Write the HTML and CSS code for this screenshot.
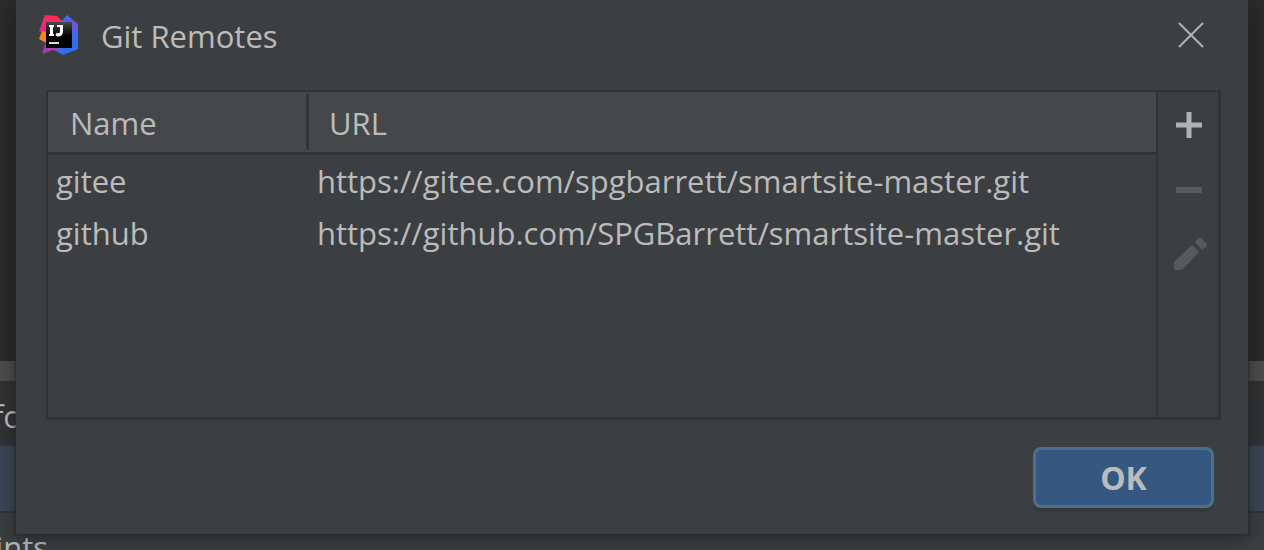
FILE: index.html
```html
<!DOCTYPE html>
<html lang="en">
<head>
<meta charset="utf-8">
<title>Git Remotes</title>
<link rel="stylesheet" href="styles.css">
</head>
<body>
<div class="workspace">
  <div class="backdrop">
    <div class="editor"></div>
    <div class="splitter"></div>
    <div class="row row-header"><span class="clip">fo</span></div>
    <div class="row row-selected"></div>
    <div class="row row-last"><span class="clip clip-wide">ints</span></div>
  </div>
  <section class="dialog" role="dialog" aria-labelledby="dialog-title">
    <header class="titlebar">
      <svg class="logo" viewBox="0 0 40 42" aria-hidden="true">
        <defs>
          <linearGradient id="blue" x1="0" y1="0" x2="0.6" y2="1">
            <stop offset="0" stop-color="#3b6df0"/><stop offset="0.35" stop-color="#4a66e6"/><stop offset="0.5" stop-color="#7551d8"/><stop offset="0.75" stop-color="#3a6ce8"/><stop offset="1" stop-color="#2f6cf0"/>
          </linearGradient>
          <linearGradient id="red" x1="0.4" y1="0" x2="0.2" y2="1">
            <stop offset="0" stop-color="#ff2857"/><stop offset="0.5" stop-color="#f52a68"/><stop offset="1" stop-color="#c02c9c"/>
          </linearGradient>
          <linearGradient id="violet" x1="0" y1="0" x2="1" y2="0">
            <stop offset="0" stop-color="#9c3ac4"/><stop offset="0.6" stop-color="#c03a9c"/><stop offset="1" stop-color="#6a56dd"/>
          </linearGradient>
          <linearGradient id="tile" x1="0" y1="0" x2="0" y2="1">
            <stop offset="0" stop-color="#484848"/><stop offset="0.55" stop-color="#000"/>
          </linearGradient>
        </defs>
        <path fill="url(#blue)" d="M28 1 39 10V35L24 41 15 36 22 8Z"/>
        <path fill="url(#red)" d="M6 1 18 2 24 8 22 20H8L0 17Z"/>
        <path fill="#fc801d" d="M3 17 9 18V30L0 25Z"/>
        <path fill="url(#violet)" d="M6 30H22L20 35 14 36 3 40Z"/>
        <path fill="url(#tile)" d="M7 8H33V34H7Z"/>
        <path fill="none" stroke="#fff" stroke-width="2" d="M10 12H15M10 21H15M18 12H24"/>
        <path fill="none" stroke="#fff" stroke-width="3" d="M12.500 12V21M22.500 12V18Q22 21 19 21L17 20"/>
        <path fill="#ddd" d="M10 28H20V30H10Z"/>
      </svg>
      <h1 class="title" id="dialog-title">Git Remotes</h1>
      <button class="close" type="button" aria-label="Close">
        <svg viewBox="0 0 26 26" aria-hidden="true"><path d="M1 1 25 25M25 1 1 25"/></svg>
      </button>
    </header>
    <div class="panel">
      <div class="list">
        <table class="remotes">
          <thead>
            <tr><th class="name" scope="col">Name</th><th scope="col">URL</th></tr>
          </thead>
          <tbody>
            <tr><td>gitee</td><td>https://gitee.com/spgbarrett/smartsite-master.git</td></tr>
            <tr><td>github</td><td>https://github.com/SPGBarrett/smartsite-master.git</td></tr>
          </tbody>
        </table>
      </div>
      <div class="tools">
        <button class="tool" type="button" aria-label="Add"><svg viewBox="0 0 36 36" aria-hidden="true"><path d="M15.500 5h5v10.500H31v5H20.500V31h-5V20.500H5v-5h10.500Z"/></svg></button>
        <button class="tool" type="button" aria-label="Remove" disabled><svg viewBox="0 0 36 36" aria-hidden="true"><path d="M5 15h26v6H5Z"/></svg></button>
        <button class="tool" type="button" aria-label="Edit" disabled><svg viewBox="0 0 36 36" aria-hidden="true"><path d="M21 8 28 15 11 33H3V25ZM24 5 27 2Q29 0 31 2L35 6Q37 8 35 10L31 13Z"/></svg></button>
      </div>
    </div>
    <footer class="actions"><button class="ok" type="button">OK</button></footer>
  </section>
</div>
</body>
</html>
```
FILE: styles.css
```css
* {
  box-sizing: border-box;
}

body {
  margin: 0;
  background: #3c3f41;
  color: #bbbbbb;
  font-family: "Open Sans", "Noto Sans", sans-serif;
  font-size: 31px;
  line-height: 44px;
}

button {
  padding: 0;
  border: 0;
  background: none;
  color: inherit;
  font: inherit;
}

svg {
  display: block;
}

.workspace {
  position: relative;
  min-height: 100vh;
  overflow: hidden;
}

.backdrop {
  display: flex;
  flex-direction: column;
  height: 100vh;
}

.editor {
  flex: 1;
  background: #2b2b2b;
}

.splitter {
  height: 24px;
  border-bottom: 4px solid #323232;
  background: #4d4d4d;
}

.row {
  display: flex;
  align-items: center;
  overflow: hidden;
}

.row-header {
  height: 61px;
  background: #313335;
}

.row-selected {
  height: 67px;
  border-bottom: 2px solid #313335;
  background: #3b4754;
}

.row-last {
  height: 37px;
  align-items: flex-start;
}

.clip {
  display: flex;
  justify-content: flex-end;
  width: 22px;
}

.clip-wide {
  width: 48px;
  padding-top: 12px;
}

.dialog {
  position: absolute;
  top: 0;
  left: 16px;
  right: 16px;
  padding: 0 27px 26px 30px;
  background: #3c3f41;
  box-shadow: 0 0 0 2px rgba(40, 40, 40, 0.5), 0 4px 20px rgba(0, 0, 0, 0.4);
}

.titlebar {
  display: flex;
  align-items: center;
  height: 90px;
  padding: 0 17px 20px 0;
}

.logo {
  width: 40px;
  height: 42px;
  margin: 0 22px 0 -7px;
}

.title {
  flex: 1;
  margin: 2px 0 0;
  font-size: 31px;
  font-weight: 400;
}

.close svg {
  width: 26px;
  height: 26px;
  fill: none;
  stroke: #afb1b3;
  stroke-width: 2;
}

.panel {
  display: flex;
  min-height: 330px;
  border: 2px solid #323232;
  border-right-width: 3px;
  border-bottom-width: 3px;
}

.list {
  flex: 1;
  border-right: 2px solid #323232;
}

.remotes {
  width: 100%;
  border-collapse: separate;
  border-spacing: 0;
  table-layout: fixed;
}

.remotes th {
  height: 63px;
  padding: 2px 20px 0;
  border-bottom: 3px solid #313335;
  background: linear-gradient(#313335, #313335) 100% 50% / 0 56px no-repeat #45484a;
  font-weight: 400;
  text-align: left;
}

.remotes .name {
  width: 261px;
  padding-left: 22px;
  background-size: 3px 56px;
}

.remotes td {
  height: 52px;
  padding: 0 8px;
}

.tools {
  display: flex;
  flex-direction: column;
  align-items: center;
  width: 60px;
}

.tool {
  display: flex;
  align-items: center;
  justify-content: center;
  width: 62px;
  height: 65px;
  padding-left: 2px;
  fill: #afb1b3;
}

.tool:disabled {
  fill: #595959;
}

.tool svg {
  width: 36px;
  height: 36px;
}

.actions {
  display: flex;
  justify-content: flex-end;
  padding: 27px 7px 0 0;
}

.ok {
  width: 181px;
  height: 61px;
  border: 3px solid #4c708c;
  border-radius: 8px;
  background: #365880;
  box-shadow: 0 4px 0 rgba(50, 50, 50, 0.4);
  font-size: 32px;
  font-weight: 700;
}
```
